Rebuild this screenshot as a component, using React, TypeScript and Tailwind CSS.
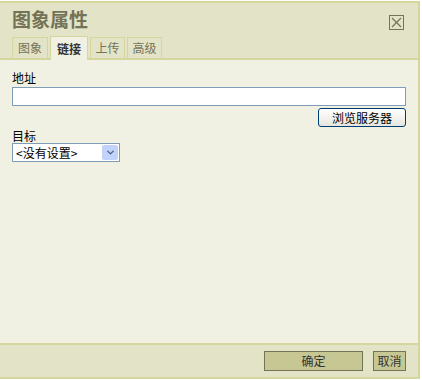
import { ChevronDown } from "lucide-react";

const font = { fontFamily: '"Noto Sans CJK SC", "Noto Sans", sans-serif' };

const tabs = [
  { label: "图象", w: "w-[36px]" },
  { label: "链接", w: "w-[38px]", active: true },
  { label: "上传", w: "w-[35px]" },
  { label: "高级", w: "w-[35px]" },
];

export default function App() {
  return (
    <div className="h-[380px] w-[422px] bg-white pt-[1px]" style={font}>
      <div className="flex h-[378px] w-[420px] flex-col border-t-2 border-b-2 border-r-2 border-[#d5d59d] bg-[#e3e3c7]">
        {/* title bar */}
        <div className="flex h-[33px] items-start justify-between pl-[12px] pr-[14px] pt-[5px]">
          <span className="text-[19px] font-bold leading-[22px] text-[#737357]">图象属性</span>
          <span className="mt-[7px] flex h-[15px] w-[15px] items-center justify-center border border-[#737357] text-[#737357]">
            <svg width="11" height="11" viewBox="0 0 11 11">
              <path d="M1 1L10 10M10 1L1 10" stroke="currentColor" strokeWidth="1.2" />
            </svg>
          </span>
        </div>

        {/* tabs */}
        <div className="flex h-[22px] items-end gap-[2px] pl-[12px]">
          {tabs.map((t) => (
            <div
              key={t.label}
              className={`flex items-center justify-center border-x border-t border-[#d5d59d] text-[12px] ${t.w} ${
                t.active
                  ? "relative z-10 -mb-[2px] h-[24px] bg-[#f1f1e3] font-bold text-[#333]"
                  : "h-[21px] bg-[#e3e3c7] text-[#737357]"
              }`}
            >
              {t.label}
            </div>
          ))}
        </div>

        {/* content */}
        <div className="flex-1 border-t-2 border-[#d5d59d] bg-[#f1f1e3] px-[12px] pt-[10px]">
          <div className="text-[12px] leading-[16px] text-black">地址</div>
          <div className="mt-[1px] h-[19px] w-[394px] border border-[#7f9db9] bg-white" />
          <div className="mt-[2px] flex w-[394px] justify-end">
            <button className="h-[19px] w-[88px] rounded-[3px] border border-[#003c74] bg-gradient-to-b from-white to-[#e6e6e0] text-[12px] leading-[16px] text-black">
              浏览服务器
            </button>
          </div>
          <div className="mt-[1px] text-[12px] leading-[15px] text-black">目标</div>
          <div className="flex h-[19px] w-[108px] items-center justify-between border border-[#7f9db9] bg-white pl-[3px] pr-[1px]">
            <span className="text-[12px] leading-[15px] text-black">&lt;没有设置&gt;</span>
            <span className="flex h-[15px] w-[16px] items-center justify-center rounded-[2px] bg-[#c1d3fb] text-[#4d6185]">
              <ChevronDown size={11} strokeWidth={3} />
            </span>
          </div>
        </div>

        {/* footer */}
        <div className="flex h-[34px] items-center justify-end gap-[10px] border-t-2 border-[#d5d59d] pr-[12px]">
          <button className="h-[20px] w-[99px] border border-[#737357] bg-[#c7c794] text-[12px] leading-[16px] text-[#333]">
            确定
          </button>
          <button className="h-[20px] w-[33px] border border-[#737357] bg-[#c7c794] text-[12px] leading-[16px] text-[#333]">
            取消
          </button>
        </div>
      </div>
    </div>
  );
}
